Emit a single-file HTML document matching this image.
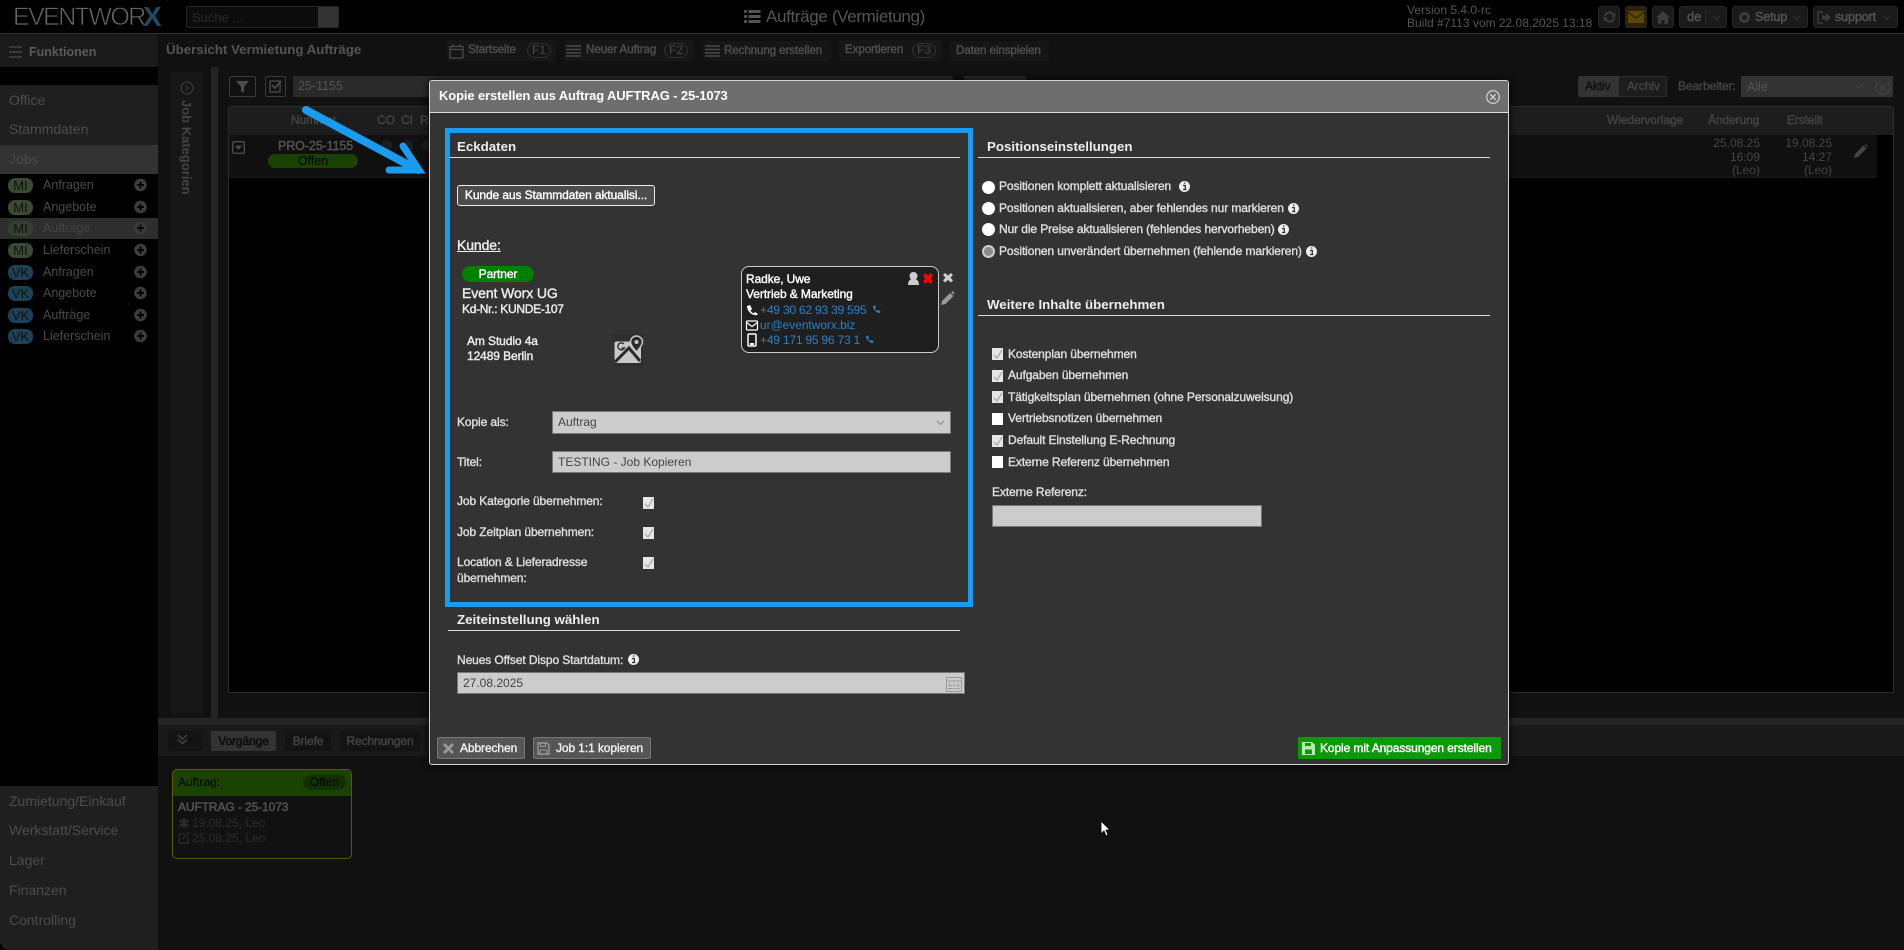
<!DOCTYPE html>
<html lang="de"><head><meta charset="utf-8"><title>Aufträge (Vermietung)</title>
<style>
*{box-sizing:border-box}
html,body{margin:0;padding:0;width:1904px;height:950px;overflow:hidden;background:#111;font-family:"Liberation Sans",sans-serif;font-size:12px}
.r,.a{position:absolute}
.a{white-space:nowrap;line-height:16px}
.b{font-weight:normal;-webkit-text-stroke:.4px currentColor;letter-spacing:-.1px}
.h{font-weight:bold}
.hb{position:absolute;background:#1a1a1a;border:1px solid #262626;border-radius:3px}
.tb{position:absolute;background:#161616;border-radius:3px}
.n{color:#4c4c4c;font-size:14px;left:9px}
.pill{position:absolute;left:8px;width:25px;height:15px;border-radius:7px;color:#111;font-size:13px;line-height:15px;text-align:center}
.mi{background:#3a4a30}.vk{background:#1d4258}
.li{color:#4a4a4a;left:43px;font-size:12.5px}
.m{color:#ddd}
.cb{position:absolute;width:11px;height:12px;background:#e6e6e6}
.cb.u{background:#fff}
.cb svg{display:block}
.rad{position:absolute;left:982px;width:13px;height:13px;border-radius:50%;background:#fff}
.inp{position:absolute;background:#ccc;border:1px solid #777;color:#444;line-height:20px;padding-left:5px;font-size:12px}
.l{position:absolute;height:1px;background:#ddd}
.bl{color:#2b80c4}
.tt{color:#4f4f4f;font-size:11.6px}
.fk{position:absolute;height:15px;width:24px;border:1px solid #333;border-radius:8px;color:#4a4a4a;text-align:center;line-height:13px;font-size:12px}
</style></head><body>

<!-- top header -->
<div class="r" style="left:0;top:0;width:1904px;height:34px;background:#000;border-bottom:1px solid #333"></div>
<div class="a" style="left:13px;top:4px;line-height:26px;font-size:25px;color:#666;letter-spacing:-1.6px;-webkit-text-stroke:.7px #000">EVENTWOR</div>
<div class="a h" style="left:143px;top:3px;line-height:28px;font-size:28px;color:#234a62">X</div>
<div class="r" style="left:186px;top:6px;width:153px;height:22px;background:#0c0c0c;border:1px solid #262626;border-radius:2px"></div>
<div class="r" style="left:318px;top:7px;width:20px;height:20px;background:#333"></div>
<div class="a" style="left:192px;top:10px;color:#2a2a2a;font-size:13px">Suche ...</div>
<svg class="r" style="left:744px;top:10px" width="17" height="14" viewBox="0 0 17 14"><g fill="#555"><rect x="0" y="0" width="3" height="3" rx="1"/><rect x="0" y="5" width="3" height="3" rx="1"/><rect x="0" y="10" width="3" height="3" rx="1"/><rect x="4.500" y="0" width="12" height="3"/><rect x="4.500" y="5" width="12" height="3"/><rect x="4.500" y="10" width="12" height="3"/></g></svg>
<div class="a" style="left:766px;top:8px;color:#555;font-size:17px;line-height:18px;letter-spacing:-.35px">Aufträge (Vermietung)</div>
<div class="a" style="left:1407px;top:4px;color:#555;line-height:12.500px;font-size:12px">Version 5.4.0-rc<br>Build #7113 vom 22.08.2025 13:18</div>
<div class="hb" style="left:1598px;top:6px;width:22px;height:22px"></div>
<div class="hb" style="left:1625px;top:6px;width:22px;height:22px;background:#2c2205"></div>
<div class="hb" style="left:1652px;top:6px;width:22px;height:22px"></div>
<div class="hb" style="left:1679px;top:6px;width:48px;height:22px"></div>
<div class="hb" style="left:1732px;top:6px;width:76px;height:22px"></div>
<div class="hb" style="left:1813px;top:6px;width:85px;height:22px"></div>
<svg class="r" style="left:1602px;top:9px" width="15" height="16" viewBox="0 0 15 16"><path d="M2 7a5.500 5.500 0 0 1 10-2l1.500-1.500V8H9l1.500-1.500a3.500 3.500 0 0 0-6.500.5zM13 9a5.500 5.500 0 0 1-10 2l-1.500 1.500V8H6l-1.500 1.500a3.500 3.500 0 0 0 6.500-.5z" fill="#3a3a3a"/></svg>
<svg class="r" style="left:1628px;top:11px" width="16" height="12" viewBox="0 0 16 12"><rect width="16" height="12" fill="#5c4708"/><path d="M0 1l8 6 8-6" fill="none" stroke="#2c2205" stroke-width="1.400"/></svg>
<svg class="r" style="left:1656px;top:11px" width="14" height="13" viewBox="0 0 14 13"><path d="M7 0L0 6.500h2V13h3.500V9h3v4H12V6.500h2z" fill="#3c3c3c"/></svg>
<div class="a b" style="left:1687px;top:9px;color:#555;font-size:13px">de</div>
<div class="r" style="left:1705px;top:10px;width:1px;height:14px;background:#2c2c2c"></div>
<svg class="r" style="left:1712px;top:15px" width="9" height="6" viewBox="0 0 9 6"><path d="M1 1l3.500 3.500L8 1" fill="none" stroke="#333"/></svg>
<svg class="r" style="left:1738px;top:11px" width="13" height="13" viewBox="0 0 13 13"><circle cx="6.500" cy="6.500" r="4" fill="none" stroke="#3c3c3c" stroke-width="3"/></svg>
<div class="a b" style="left:1755px;top:9px;color:#555;font-size:12.500px">Setup</div>
<svg class="r" style="left:1792px;top:15px" width="9" height="6" viewBox="0 0 9 6"><path d="M1 1l3.500 3.500L8 1" fill="none" stroke="#333"/></svg>
<svg class="r" style="left:1817px;top:11px" width="14" height="13" viewBox="0 0 14 13"><path d="M6 1H1v11h5" fill="none" stroke="#3c3c3c" stroke-width="1.500"/><path d="M5 4.500h4V2l5 4.500L9 11V8.500H5z" fill="#3c3c3c"/></svg>
<div class="a b" style="left:1835px;top:9px;color:#555;font-size:12.500px">support</div>
<svg class="r" style="left:1882px;top:15px" width="9" height="6" viewBox="0 0 9 6"><path d="M1 1l3.500 3.500L8 1" fill="none" stroke="#333"/></svg>

<!-- toolbar -->
<div class="r" style="left:0;top:35px;width:158px;height:32px;background:#1a1a1a"></div>
<svg class="r" style="left:9px;top:46px" width="13" height="12" viewBox="0 0 13 12"><path d="M0 1h13M0 6h13M0 11h13" stroke="#444" stroke-width="1.500"/></svg>
<div class="a h" style="left:29px;top:44px;color:#5a5a5a;font-size:12.500px">Funktionen</div>
<div class="a h" style="left:166px;top:42px;color:#555;font-size:13.300px">Übersicht Vermietung Aufträge</div>

<div class="tb" style="left:446px;top:40px;width:110px;height:21px"></div>
<svg class="r" style="left:449px;top:44px" width="15" height="15" viewBox="0 0 15 15"><path d="M1 2.500h13V14H1zM1 5.500h13M4 0v3M11 0v3" fill="none" stroke="#4a4a4a" stroke-width="1.300"/></svg>
<div class="a b tt" style="left:468px;top:42px">Startseite</div>
<div class="fk" style="left:527px;top:43px">F1</div>
<div class="tb" style="left:564px;top:40px;width:130px;height:21px"></div>
<svg class="r" style="left:566px;top:45px" width="15" height="12" viewBox="0 0 15 12"><path d="M0 1h15M0 4.500h15M0 8h15M0 11h15" stroke="#4a4a4a" stroke-width="1.400"/></svg>
<div class="a b tt" style="left:586px;top:42px">Neuer Auftrag</div>
<div class="fk" style="left:664px;top:43px">F2</div>
<div class="tb" style="left:702px;top:41px;width:129px;height:20px"></div>
<svg class="r" style="left:705px;top:45px" width="15" height="12" viewBox="0 0 15 12"><path d="M0 1h15M0 4.500h15M0 8h15M0 11h15" stroke="#4a4a4a" stroke-width="1.400"/></svg>
<div class="a b tt" style="left:724px;top:43px">Rechnung erstellen</div>
<div class="tb" style="left:838px;top:40px;width:104px;height:21px"></div>
<div class="a b tt" style="left:845px;top:42px">Exportieren</div>
<div class="fk" style="left:912px;top:43px">F3</div>
<div class="tb" style="left:949px;top:41px;width:100px;height:20px"></div>
<div class="a b tt" style="left:956px;top:43px">Daten einspielen</div>

<!-- sidebar -->
<div class="r" style="left:0;top:67px;width:158px;height:883px;background:#000"></div>
<div class="r" style="left:0;top:85px;width:158px;height:60px;background:#1f1f1f"></div>
<div class="a n" style="top:92px">Office</div>
<div class="a n" style="top:121px">Stammdaten</div>
<div class="r" style="left:0;top:145px;width:158px;height:29px;background:#333"></div>
<div class="a n" style="top:151px;color:#4a4a4a">Jobs</div>
<div class="r" style="left:0;top:218px;width:158px;height:21px;background:#2e2e2e"></div>

<div class="pill mi" style="top:178px">MI</div><div class="a li" style="top:177px">Anfragen</div>
<div class="pill mi" style="top:200px">MI</div><div class="a li" style="top:199px">Angebote</div>
<div class="pill mi" style="top:221px;background:#344030">MI</div><div class="a li" style="top:220px;color:#444">Aufträge</div>
<div class="pill mi" style="top:243px">MI</div><div class="a li" style="top:242px">Lieferschein</div>
<div class="pill vk" style="top:265px">VK</div><div class="a li" style="top:264px">Anfragen</div>
<div class="pill vk" style="top:286px">VK</div><div class="a li" style="top:285px">Angebote</div>
<div class="pill vk" style="top:308px">VK</div><div class="a li" style="top:307px">Aufträge</div>
<div class="pill vk" style="top:329px">VK</div><div class="a li" style="top:328px">Lieferschein</div>
<svg class="r" style="left:134px;top:178px" width="14" height="165" viewBox="0 0 14 165"><defs><g id="pl"><circle cx="6.500" cy="7" r="6.200" fill="#3e3e3e"/><path d="M3 7h7M6.500 3.500v7" stroke="#000" stroke-width="2"/></g></defs><use href="#pl"/><use href="#pl" y="22"/><use href="#pl" y="43" opacity=".75"/><use href="#pl" y="65"/><use href="#pl" y="87"/><use href="#pl" y="108"/><use href="#pl" y="130"/><use href="#pl" y="151"/></svg>

<div class="r" style="left:0;top:786px;width:158px;height:164px;background:#1f1f1f;border-bottom-left-radius:10px"></div>
<div class="a n" style="top:793px">Zumietung/Einkauf</div>
<div class="a n" style="top:822px">Werkstatt/Service</div>
<div class="a n" style="top:852px">Lager</div>
<div class="a n" style="top:882px">Finanzen</div>
<div class="a n" style="top:912px">Controlling</div>

<!-- content -->
<div class="r" style="left:171px;top:72px;width:32px;height:641px;background:#171717"></div>
<svg class="r" style="left:180px;top:81px" width="14" height="14" viewBox="0 0 14 14"><circle cx="7" cy="7" r="6" fill="none" stroke="#3a3a3a" stroke-width="1.200"/><path d="M5.500 4l3 3-3 3" fill="none" stroke="#3a3a3a"/></svg>
<div class="a h" style="left:179px;top:100px;writing-mode:vertical-rl;color:#444;font-size:13px;line-height:14px">Job Kategorien</div>
<div class="r" style="left:211px;top:67px;width:7px;height:651px;background:#242424"></div>

<div class="r" style="left:229px;top:76px;width:27px;height:21px;border:1px solid #3a3a3a;border-radius:2px"></div>
<svg class="r" style="left:236px;top:81px" width="13" height="12" viewBox="0 0 13 12"><path d="M0 0h13L8 6v6L5 10V6z" fill="#4c4c4c"/></svg>
<div class="r" style="left:265px;top:76px;width:21px;height:21px;border:1px solid #3a3a3a;border-radius:2px"></div>
<svg class="r" style="left:269px;top:80px" width="14" height="13" viewBox="0 0 14 13"><path d="M1 1h10v11H1z" fill="none" stroke="#4c4c4c" stroke-width="1.300"/><path d="M3 5l3 3 6-7" fill="none" stroke="#4c4c4c" stroke-width="1.800"/></svg>
<div class="r" style="left:293px;top:76px;width:660px;height:21px;background:#2a2a2a"></div>
<div class="a" style="left:298px;top:78px;color:#555;font-size:12.500px">25-1155</div>
<div class="r" style="left:964px;top:76px;width:62px;height:21px;background:#2a2a2a"></div>

<div class="r" style="left:1578px;top:76px;width:41px;height:21px;background:#333;border-radius:2px 0 0 2px"></div>
<div class="r" style="left:1619px;top:76px;width:48px;height:21px;background:#1c1c1c;border:1px solid #2a2a2a;border-left:0"></div>
<div class="a b" style="left:1585px;top:78px;color:#111;font-size:12px">Aktiv</div>
<div class="a b" style="left:1627px;top:78px;color:#444;font-size:12px">Archiv</div>
<div class="a b" style="left:1678px;top:78px;color:#444;font-size:12px">Bearbeiter:</div>
<div class="r" style="left:1741px;top:76px;width:152px;height:21px;background:#333"></div>
<div class="a" style="left:1747px;top:79px;color:#555;font-size:12.500px">Alle</div>
<svg class="r" style="left:1854px;top:82px" width="39" height="15" viewBox="0 0 39 15"><path d="M1 3l3.500 3.500L8 3" fill="none" stroke="#444"/><circle cx="29" cy="5.500" r="7" fill="none" stroke="#444" stroke-width="1.300"/><path d="M25.500 2l7 7M32.500 2l-7 7" stroke="#444"/></svg>

<div class="r" style="left:228px;top:106px;width:1666px;height:587px;background:#000;border:1px solid #2c2c2c;border-radius:3px 3px 0 0"></div>
<div class="r" style="left:229px;top:107px;width:1664px;height:28px;background:#1d1d1d"></div>
<div class="r" style="left:229px;top:135px;width:1648px;height:43px;background:#101010;border-bottom:1px solid #1a1a1a"></div>
<div class="a b" style="left:291px;top:112px;color:#444;font-size:12px">Nummer</div>
<div class="a b" style="left:377px;top:112px;color:#444;font-size:12px">CO</div>
<div class="a b" style="left:401px;top:112px;color:#444;font-size:12px">CI</div>
<div class="a b" style="left:420px;top:112px;color:#444;font-size:12px">R</div>
<div class="a b" style="left:1607px;top:112px;color:#444;font-size:12px">Wiedervorlage</div>
<div class="a b" style="left:1708px;top:112px;color:#444;font-size:12px">Änderung</div>
<div class="a b" style="left:1787px;top:112px;color:#444;font-size:12px">Erstellt</div>
<svg class="r" style="left:232px;top:141px" width="13" height="13" viewBox="0 0 13 13"><rect x=".7" y=".7" width="11.600" height="11.600" rx="1.500" fill="none" stroke="#4c4c4c" stroke-width="1.400"/><path d="M3 4.500h7L6.500 9z" fill="#4c4c4c"/></svg>
<div class="a b" style="left:278px;top:138px;color:#555;font-size:12.500px">PRO-25-1155</div>
<div class="r" style="left:268px;top:154px;width:90px;height:14px;border-radius:7px;background:#1a4200;color:#000;text-align:center;line-height:14px;font-size:12.500px">Offen</div>
<div class="r" style="left:381px;top:140px;width:11px;height:11px;border-radius:50%;background:#1d1d1d"></div>
<div class="r" style="left:402px;top:140px;width:11px;height:11px;border-radius:50%;background:#1d1d1d"></div>
<div class="r" style="left:422px;top:140px;width:11px;height:11px;border-radius:50%;background:#1d1d1d"></div>
<div class="a" style="right:144px;top:137px;color:#454545;text-align:right;line-height:13.500px;font-size:12px">25.08.25<br>16:09<br>(Leo)</div>
<div class="a" style="right:72px;top:137px;color:#454545;text-align:right;line-height:13.500px;font-size:12px">19.08.25<br>14:27<br>(Leo)</div>
<svg class="r" style="left:1854px;top:144px" width="14" height="14" viewBox="0 0 14 14"><path d="M0 14l1-4L9.500 1.500l3 3L4 13zM10.500.5l1-.5 2.500 2.500-.5 1z" fill="#444"/></svg>

<!-- bottom -->
<div class="r" style="left:158px;top:718px;width:1746px;height:7px;background:#242424"></div>
<div class="r" style="left:158px;top:725px;width:1746px;height:31px;background:#191919"></div>
<div class="r" style="left:158px;top:756px;width:1746px;height:194px;background:#111"></div>
<div class="tb" style="left:168px;top:731px;width:34px;height:20px;background:#131313"></div>
<svg class="r" style="left:176px;top:734px" width="13" height="11" viewBox="0 0 13 11"><path d="M2 1l4.500 4L11 1M2 5.500l4.500 4 4.500-4" fill="none" stroke="#444" stroke-width="1.500"/></svg>
<div class="tb b" style="left:211px;top:731px;width:65px;height:20px;background:#333;border-radius:2px;color:#0a0a0a;text-align:center;line-height:20px;font-size:12px">Vorgänge</div>
<div class="tb b" style="left:285px;top:731px;width:46px;height:20px;background:#131313;color:#444;text-align:center;line-height:20px;font-size:12px">Briefe</div>
<div class="tb b" style="left:340px;top:731px;width:80px;height:20px;background:#131313;color:#444;text-align:center;line-height:20px;font-size:12px">Rechnungen</div>
<div class="r" style="left:172px;top:769px;width:180px;height:90px;border:1px solid #5a5a00;border-radius:5px;overflow:hidden;background:#111"><div style="height:26px;background:#1a4200"></div></div>
<div class="a" style="left:178px;top:774px;color:#000;font-size:12px">Auftrag:</div>
<div class="r" style="left:303px;top:775px;width:43px;height:15px;background:#123000;border-radius:8px;text-align:center;color:#000;line-height:15px;font-size:12px">Offen</div>
<div class="a b" style="left:178px;top:799px;color:#555;font-size:12px">AUFTRAG - 25-1073</div>
<div class="a" style="left:192px;top:815px;color:#2c2c2c;font-size:12px">19.08.25, Leo</div>
<div class="a" style="left:192px;top:830px;color:#2c2c2c;font-size:12px">25.08.25, Leo</div>
<svg class="r" style="left:178px;top:817px" width="12" height="27" viewBox="0 0 12 27"><path d="M6 1v10M1.500 3l9 6M10.500 3l-9 6" stroke="#2c2c2c" stroke-width="2.400"/><path d="M1 17h6M1 17v9h9v-5M4.500 22l7-7" fill="none" stroke="#2c2c2c" stroke-width="1.300"/></svg>

<svg class="r" style="left:1096px;top:818px" width="16" height="22" viewBox="0 0 16 22"><path d="M5 3v13l3-3 2 5 2-1-2-5h4z" fill="#fff" stroke="#000" stroke-width=".8"/></svg>

<!-- modal -->
<div class="r" style="left:429px;top:80px;width:1080px;height:685px;background:#333;border:1px solid #d4d4d4;border-radius:3px;box-shadow:0 0 8px #000"></div>
<div class="r" style="left:430px;top:81px;width:1078px;height:31px;background:#6e6e6e;border-radius:2px 2px 0 0"></div>
<div class="r" style="left:430px;top:112px;width:1078px;height:1px;background:#ddd"></div>
<div class="a h" style="left:439px;top:88px;color:#fff;font-size:13px;letter-spacing:-.13px">Kopie erstellen aus Auftrag AUFTRAG - 25-1073</div>
<svg class="r" style="left:1486px;top:90px" width="14" height="14" viewBox="0 0 14 14"><circle cx="7" cy="7" r="6.300" fill="none" stroke="#ddd" stroke-width="1.100"/><path d="M4.300 4.300l5.400 5.400M9.700 4.300l-5.400 5.400" stroke="#ddd" stroke-width="1.100"/></svg>

<div class="r" style="left:445px;top:128px;width:528px;height:479px;border:5px solid #1a9bf0"></div>

<div class="a h" style="left:457px;top:139px;color:#eee;font-size:13.300px">Eckdaten</div>
<div class="l" style="left:450px;top:157px;width:510px"></div>
<div class="r b" style="left:457px;top:185px;width:198px;height:21px;background:#4c4c4c;border:1px solid #eee;border-radius:3px;color:#fff;text-align:center;line-height:19px;font-size:12px;white-space:nowrap">Kunde aus Stammdaten aktualisi...</div>
<div class="a b" style="left:457px;top:237px;color:#eee;font-size:14px;text-decoration:underline">Kunde:</div>
<div class="r b" style="left:462px;top:266px;width:72px;height:16px;background:#008000;border-radius:8px;color:#fff;text-align:center;line-height:16px;font-size:12px">Partner</div>
<div class="a b" style="left:462px;top:285px;color:#eee;font-size:14px">Event Worx UG</div>
<div class="a b" style="left:462px;top:301px;color:#eee;font-size:12px;letter-spacing:-.3px">Kd-Nr.: KUNDE-107</div>
<div class="a b" style="left:467px;top:333px;color:#eee;font-size:12px">Am Studio 4a</div>
<div class="a b" style="left:467px;top:348px;color:#eee;font-size:12px">12489 Berlin</div>
<svg class="r" style="left:605px;top:328px" width="46" height="44" viewBox="0 0 46 44"><rect x="8" y="6" width="30" height="32" fill="#2e2e2e"/><rect x="9.500" y="13.500" width="26.500" height="21.500" rx="2" fill="#c8c8c8"/><path d="M10 34L24 20l11 13" fill="none" stroke="#2a2a2a" stroke-width="3"/><path d="M31.500 8a6 6 0 0 1 6 6c0 3.500-6 10-6 10s-6-6.500-6-10a6 6 0 0 1 6-6z" fill="#2a2a2a" stroke="#c8c8c8" stroke-width="1.500"/><circle cx="31.500" cy="14" r="2" fill="#c8c8c8"/><path d="M19 16a3.500 3.500 0 1 0 .5 4h-3" fill="none" stroke="#333" stroke-width="1.500"/></svg>

<div class="r" style="left:741px;top:266px;width:198px;height:87px;background:#1f1f1f;border:1px solid #ccc;border-radius:8px"></div>
<div class="a b" style="left:746px;top:271px;color:#fff;font-size:12px">Radke, Uwe</div>
<div class="a b" style="left:746px;top:286px;color:#fff;font-size:12px">Vertrieb &amp; Marketing</div>
<div class="a bl" style="left:760px;top:302px;font-size:12.200px;letter-spacing:-.3px">+49 30 62 93 39 595</div>
<div class="a bl" style="left:760px;top:317px;font-size:11.900px">ur@eventworx.biz</div>
<div class="a bl" style="left:760px;top:332px;font-size:12.200px;letter-spacing:-.3px">+49 171 95 96 73 1</div>
<svg class="r" style="left:745px;top:268px" width="212" height="84" viewBox="745 268 212 84"><path d="M747 306l3-1 2 4-1.500 1.500a7 7 0 0 0 3 3l1.500-1.500 3 2-1 1c-5 1-10-4-10-9z" fill="#fff"/><path d="M873 306l2-.5 1 2.500-1 1a5 5 0 0 0 2 2l1-1 2.500 1-.5 2c-3 .5-7.500-4-7-7z" fill="#2b80c4"/><path d="M866 336l2-.5 1 2.500-1 1a5 5 0 0 0 2 2l1-1 2.500 1-.5 2c-3 .5-7.500-4-7-7z" fill="#2b80c4"/><rect x="746.500" y="321" width="11" height="9" rx="1" fill="none" stroke="#fff" stroke-width="1.200"/><path d="M746.500 322.500l5.500 4 5.500-4" fill="none" stroke="#fff" stroke-width="1.200"/><rect x="748" y="334" width="8" height="12" rx="1" fill="none" stroke="#fff" stroke-width="1.500"/><rect x="750" y="343" width="4" height="2" fill="#fff"/><circle cx="913.500" cy="276" r="4" fill="#ccc"/><path d="M908 285c0-4.500 2-6 5.500-6s5.500 1.500 5.500 6z" fill="#ccc"/><path d="M923 276l2.500-3 2.500 2.500 2.500-2.500 2.500 3-2.500 2.500 2.500 3-2.500 2.500-2.500-2.500-2.500 2.500-2.500-2.500 2.500-3z" fill="#f00"/><path d="M943 275l2-2 3 2.500 3-2.500 2 2-2.500 2.500 2.500 3-2 2-3-2.500-3 2.500-2-2 2.500-3z" fill="#ccc"/><path d="M941 305l1-4 8-8 3.500 3-8 8zM951 292l1.500-1 2 2-1 1.500z" fill="#999"/></svg>

<div class="a b m" style="left:457px;top:414px">Kopie als:</div>
<div class="inp" style="left:552px;top:411px;width:399px;height:23px">Auftrag</div>
<svg class="r" style="left:936px;top:420px" width="9" height="6" viewBox="0 0 9 6"><path d="M1 1l3.500 3.500L8 1" fill="none" stroke="#888"/></svg>
<div class="a b m" style="left:457px;top:454px">Titel:</div>
<div class="inp" style="left:552px;top:451px;width:399px;height:22px">TESTING - Job Kopieren</div>
<div class="a b m" style="left:457px;top:493px">Job Kategorie übernehmen:</div>
<div class="a b m" style="left:457px;top:524px">Job Zeitplan übernehmen:</div>
<div class="a b m" style="left:457px;top:554px">Location &amp; Lieferadresse</div>
<div class="a b m" style="left:457px;top:570px">übernehmen:</div>
<div class="cb" style="left:643px;top:497px"><svg width="11" height="12" viewBox="0 0 11 12"><path d="M2 7l3 3 5-8" fill="none" stroke="#aaa" stroke-width="1.300"/></svg></div>
<div class="cb" style="left:643px;top:527px"><svg width="11" height="12" viewBox="0 0 11 12"><path d="M2 7l3 3 5-8" fill="none" stroke="#aaa" stroke-width="1.300"/></svg></div>
<div class="cb" style="left:643px;top:557px"><svg width="11" height="12" viewBox="0 0 11 12"><path d="M2 7l3 3 5-8" fill="none" stroke="#aaa" stroke-width="1.300"/></svg></div>

<div class="a h" style="left:457px;top:612px;color:#eee;font-size:13.300px">Zeiteinstellung wählen</div>
<div class="l" style="left:448px;top:630px;width:512px"></div>
<div class="a b m" style="left:457px;top:652px">Neues Offset Dispo Startdatum:</div>
<svg class="r" style="left:628px;top:654px" width="11" height="11" viewBox="0 0 11 11"><circle cx="5.500" cy="5.500" r="5.500" fill="#eee"/><path d="M4 4.500h2.300V8.500H7.300M4 8.500h3.300M4.900 2h1.500" stroke="#333" stroke-width="1.300" fill="none"/></svg>
<div class="inp" style="left:457px;top:672px;width:508px;height:22px">27.08.2025</div>
<svg class="r" style="left:946px;top:675px" width="16" height="17" viewBox="0 0 16 17"><rect x=".5" y="2.500" width="15" height="14" fill="none" stroke="#999"/><path d="M.5 6h15" stroke="#999"/><path d="M4 8v7M8 8v7M12 8v7M2 10.500h12M2 13.500h12" stroke="#999" stroke-dasharray="1.500 1"/></svg>

<div class="r" style="left:437px;top:737px;width:88px;height:22px;background:#555;border:1px solid #777;border-radius:2px"></div>
<svg class="r" style="left:443px;top:743px" width="11" height="11" viewBox="0 0 11 11"><path d="M0 2l2-2 3.500 3.500L9 0l2 2-3.500 3.500L11 9l-2 2-3.500-3.500L2 11 0 9l3.500-3.500z" fill="#999"/></svg>
<div class="a b" style="left:460px;top:740px;color:#eee;font-size:12px">Abbrechen</div>
<div class="r" style="left:533px;top:737px;width:118px;height:22px;background:#555;border:1px solid #777;border-radius:2px"></div>
<svg class="r" style="left:537px;top:742px" width="13" height="13" viewBox="0 0 13 13"><path d="M1 1h9l2 2v9H1z" fill="none" stroke="#999" stroke-width="1.400"/><path d="M3.500 1v3.500h5V1M3 12V8h7v4" fill="none" stroke="#999"/></svg>
<div class="a b" style="left:556px;top:740px;color:#eee;font-size:12px">Job 1:1 kopieren</div>
<div class="r" style="left:1298px;top:737px;width:203px;height:22px;background:#0a9a08;border-radius:2px"></div>
<svg class="r" style="left:1302px;top:742px" width="13" height="13" viewBox="0 0 13 13"><path d="M0 0h10l3 3v10H0z" fill="#b5eab0"/><rect x="3" y="1" width="6" height="3" fill="#0a9a08"/><rect x="3" y="7.500" width="7" height="4.500" fill="#0a9a08"/></svg>
<div class="a b" style="left:1320px;top:740px;color:#fff;font-size:12px">Kopie mit Anpassungen erstellen</div>

<!-- right column -->
<div class="a h" style="left:987px;top:139px;color:#eee;font-size:13.300px">Positionseinstellungen</div>
<div class="l" style="left:978px;top:157px;width:512px"></div>
<div class="rad" style="top:181px"></div>
<div class="rad" style="top:202px"></div>
<div class="rad" style="top:223px"></div>
<div class="rad" style="top:245px;background:#8a8a8a;border:2px solid #ccc"></div>
<div class="a b m" style="left:999px;top:178px">Positionen komplett aktualisieren</div>
<div class="a b m" style="left:999px;top:200px">Positionen aktualisieren, aber fehlendes nur markieren</div>
<div class="a b m" style="left:999px;top:221px">Nur die Preise aktualisieren (fehlendes hervorheben)</div>
<div class="a b m" style="left:999px;top:243px">Positionen unverändert übernehmen (fehlende markieren)</div>
<svg class="r" style="left:1179px;top:181px" width="140" height="80" viewBox="0 0 140 80"><defs><g id="inf"><circle cx="5.500" cy="5.500" r="5.500" fill="#eee"/><path d="M4 4.500h2.300V8.500H7.300M4 8.500h3.300M4.900 2h1.500" stroke="#333" stroke-width="1.300" fill="none"/></g></defs><use href="#inf"/><use href="#inf" x="109" y="22"/><use href="#inf" x="99" y="43"/><use href="#inf" x="127" y="65"/></svg>

<div class="a h" style="left:987px;top:297px;color:#eee;font-size:13.300px">Weitere Inhalte übernehmen</div>
<div class="l" style="left:978px;top:315px;width:512px"></div>
<div class="cb" style="left:992px;top:348px"><svg width="11" height="12" viewBox="0 0 11 12"><path d="M2 7l3 3 5-8" fill="none" stroke="#aaa" stroke-width="1.300"/></svg></div>
<div class="cb" style="left:992px;top:370px"><svg width="11" height="12" viewBox="0 0 11 12"><path d="M2 7l3 3 5-8" fill="none" stroke="#aaa" stroke-width="1.300"/></svg></div>
<div class="cb" style="left:992px;top:391px"><svg width="11" height="12" viewBox="0 0 11 12"><path d="M2 7l3 3 5-8" fill="none" stroke="#aaa" stroke-width="1.300"/></svg></div>
<div class="cb u" style="left:992px;top:413px"></div>
<div class="cb" style="left:992px;top:435px"><svg width="11" height="12" viewBox="0 0 11 12"><path d="M2 7l3 3 5-8" fill="none" stroke="#aaa" stroke-width="1.300"/></svg></div>
<div class="cb u" style="left:992px;top:456px"></div>
<div class="a b m" style="left:1008px;top:346px">Kostenplan übernehmen</div>
<div class="a b m" style="left:1008px;top:367px">Aufgaben übernehmen</div>
<div class="a b m" style="left:1008px;top:389px">Tätigkeitsplan übernehmen (ohne Personalzuweisung)</div>
<div class="a b m" style="left:1008px;top:410px">Vertriebsnotizen übernehmen</div>
<div class="a b m" style="left:1008px;top:432px">Default Einstellung E-Rechnung</div>
<div class="a b m" style="left:1008px;top:454px">Externe Referenz übernehmen</div>
<div class="a b m" style="left:992px;top:484px">Externe Referenz:</div>
<div class="inp" style="left:992px;top:505px;width:270px;height:22px"></div>

<!-- arrow -->
<svg class="r" style="left:295px;top:100px" width="135" height="85" viewBox="295 100 135 85"><path d="M306 110L418 170" fill="none" stroke="#1a9bf0" stroke-width="8" stroke-linecap="round"/><path d="M403 146L419 170 389 170" fill="none" stroke="#1a9bf0" stroke-width="7" stroke-linecap="round" stroke-linejoin="miter"/></svg>

</body></html>
